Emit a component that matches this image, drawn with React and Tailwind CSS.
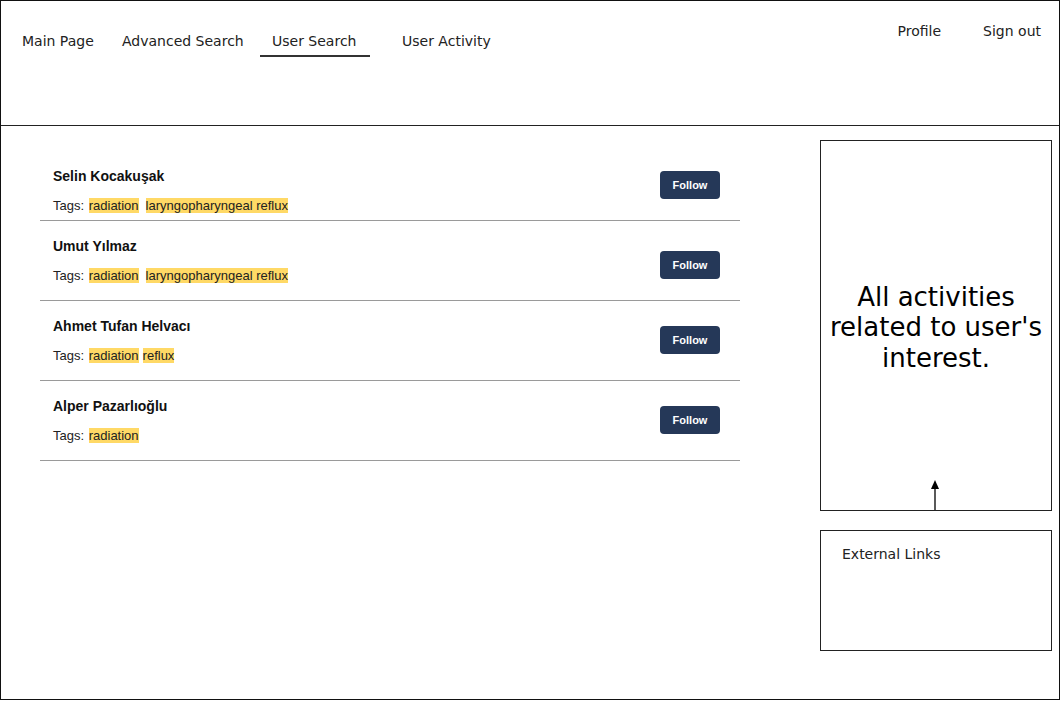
import React from "react";

const users = [
  { name: "Selin Kocakuşak", tags: ["radiation", "laryngopharyngeal reflux"], gap: "mr-[7px]", h: "h-[70px]", btn: "mt-[20px]" },
  { name: "Umut Yılmaz", tags: ["radiation", "laryngopharyngeal reflux"], gap: "mr-[7px]", h: "h-[80px]", btn: "mt-[30px]" },
  { name: "Ahmet Tufan Helvacı", tags: ["radiation", "reflux"], gap: "mr-[4px]", h: "h-[80px]", btn: "mt-[25px]" },
  { name: "Alper Pazarlıoğlu", tags: ["radiation"], gap: "mr-[4px]", h: "h-[80px]", btn: "mt-[25px]" },
];

export default function App() {
  return (
    <div className="w-[1060px] h-[700px] border border-[#111] bg-white flex flex-col" style={{ fontFamily: '"DejaVu Sans", Verdana, sans-serif' }}>
      <header className="h-[125px] shrink-0 border-b border-[#222] flex justify-between text-[14px] text-[#222]">
        <nav className="flex items-start pt-[32px] pl-[21px]">
          <div className="w-[100px] leading-[17px]">Main Page</div>
          <div className="w-[138px] leading-[17px]">Advanced Search</div>
          <div className="w-[110px] pl-3 leading-[17px] pb-[5px] border-b-2 border-[#333]">User Search</div>
          <div className="ml-[32px] leading-[17px]">User Activity</div>
        </nav>
        <div className="flex items-start pt-[22px] pr-[18px] leading-[17px]">
          <div className="mr-[42px]">Profile</div>
          <div>Sign out</div>
        </div>
      </header>

      <main className="flex flex-1">
        <section className="ml-[39px] w-[700px] mt-[25px]" style={{ fontFamily: '"Liberation Sans", Arial, sans-serif' }}>
          {users.map((u) => (
            <div key={u.name} className={`${u.h} border-b border-[#9a9a9a] flex justify-between`}>
              <div className="pl-[13px] pt-[17px]">
                <div className="text-[14px] leading-[16px] font-bold text-[#111]">{u.name}</div>
                <div className="mt-[14px] text-[13px] leading-[16px] text-[#222]">
                  Tags:{" "}
                  {u.tags.map((t, i) => (
                    <span key={t} className={`bg-[#ffd966] ${i === 0 ? "ml-px" : ""} ${i < u.tags.length - 1 ? u.gap : ""}`}>{t}</span>
                  ))}
                </div>
              </div>
              <div className={`mr-[20px] ${u.btn}`}>
                <button className="w-[60px] h-[28px] rounded-[4px] bg-[#253858] text-white text-[11px] font-bold">Follow</button>
              </div>
            </div>
          ))}
        </section>

        <aside className="ml-[80px] mt-[14px] w-[232px] flex flex-col">
          <div className="relative h-[371px] border border-[#222] flex items-center justify-center text-center">
            <div className="text-[26px] leading-[30.5px] text-black px-1 mt-[4px]">All activities related to user's interest.</div>
            <svg className="absolute left-[108px] bottom-0" width="12" height="30" viewBox="0 0 12 30">
              <line x1="6" y1="6" x2="6" y2="30" stroke="#000" strokeWidth="1.3" />
              <polygon points="6,0 2,9 10,9" fill="#000" />
            </svg>
          </div>
          <div className="mt-[19px] h-[121px] border border-[#222] pl-[21px] pt-[15px] text-[14px] leading-[17px] text-[#222]">
            External Links
          </div>
        </aside>
      </main>
    </div>
  );
}
